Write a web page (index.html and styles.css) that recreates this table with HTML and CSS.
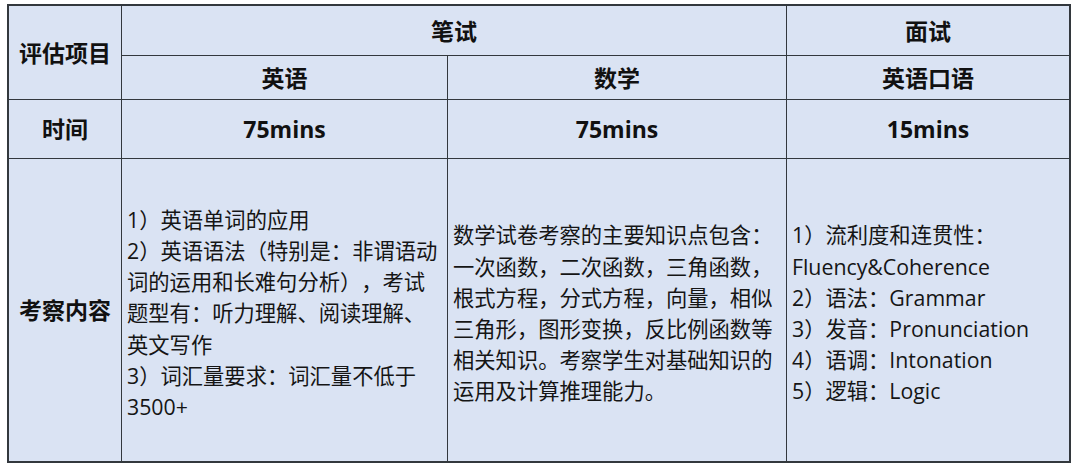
FILE: index.html
```html
<!DOCTYPE html>
<html lang="zh-CN">
<head>
<meta charset="utf-8">
<title>评估项目</title>
<link rel="stylesheet" href="styles.css">
</head>
<body>
<div class="sheet">
  <div class="cell head c1 span-r2">评估项目</div>
  <div class="cell head span-c2">笔试</div>
  <div class="cell head last-col">面试</div>

  <div class="cell head">英语</div>
  <div class="cell head">数学</div>
  <div class="cell head last-col">英语口语</div>

  <div class="cell head">时间</div>
  <div class="cell head">75mins</div>
  <div class="cell head">75mins</div>
  <div class="cell head last-col">15mins</div>

  <div class="cell head last-row">考察内容</div>
  <div class="cell body last-row">
    <p>1）英语单词的应用<br>2）英语语法（特别是：非谓语动<br>词的运用和长难句分析），考试<br>题型有：听力理解、阅读理解、<br>英文写作<br>3）词汇量要求：词汇量不低于<br>3500+</p>
  </div>
  <div class="cell body last-row">
    <p>数学试卷考察的主要知识点包含：<br>一次函数，二次函数，三角函数，<br>根式方程，分式方程，向量，相似<br>三角形，图形变换，反比例函数等<br>相关知识。考察学生对基础知识的<br>运用及计算推理能力。</p>
  </div>
  <div class="cell body last-row last-col">
    <p>1）流利度和连贯性：<br>Fluency&amp;Coherence<br>2）语法：Grammar<br>3）发音：Pronunciation<br>4）语调：Intonation<br>5）逻辑：Logic</p>
  </div>
</div>
</body>
</html>
```

FILE: styles.css
```css
html, body {
  margin: 0;
  padding: 0;
  background: #ffffff;
}

body {
  padding: 4px 0 0 7px;
  font-family: "Open Sans", "Noto Sans CJK SC", sans-serif;
  color: #151515;
  text-spacing-trim: space-all;
}

.sheet {
  display: grid;
  grid-template-columns: 113px 326px 339px 282px;
  grid-template-rows: 50px 44px 59px 302px;
  width: max-content;
  border: 2px solid #33383d;
  background: #dae3f3;
}

.cell {
  box-sizing: border-box;
  border-right: 1px solid #33383d;
  border-bottom: 1px solid #33383d;
  display: flex;
  align-items: center;
  min-width: 0;
}

.last-col {
  border-right: none;
}

.last-row {
  border-bottom: none;
}

.span-r2 {
  grid-row: span 2;
}

.span-c2 {
  grid-column: span 2;
}

.head {
  justify-content: center;
  font-family: "Open Sans", "Noto Sans CJK SC", sans-serif;
  font-weight: 700;
  font-size: 23px;
  line-height: 30px;
  color: #111111;
}

.body {
  justify-content: flex-start;
  padding: 6px 0 0 5px;
}

.body p {
  margin: 0;
  font-size: 21.3px;
  line-height: 31.2px;
  white-space: nowrap;
}
```
